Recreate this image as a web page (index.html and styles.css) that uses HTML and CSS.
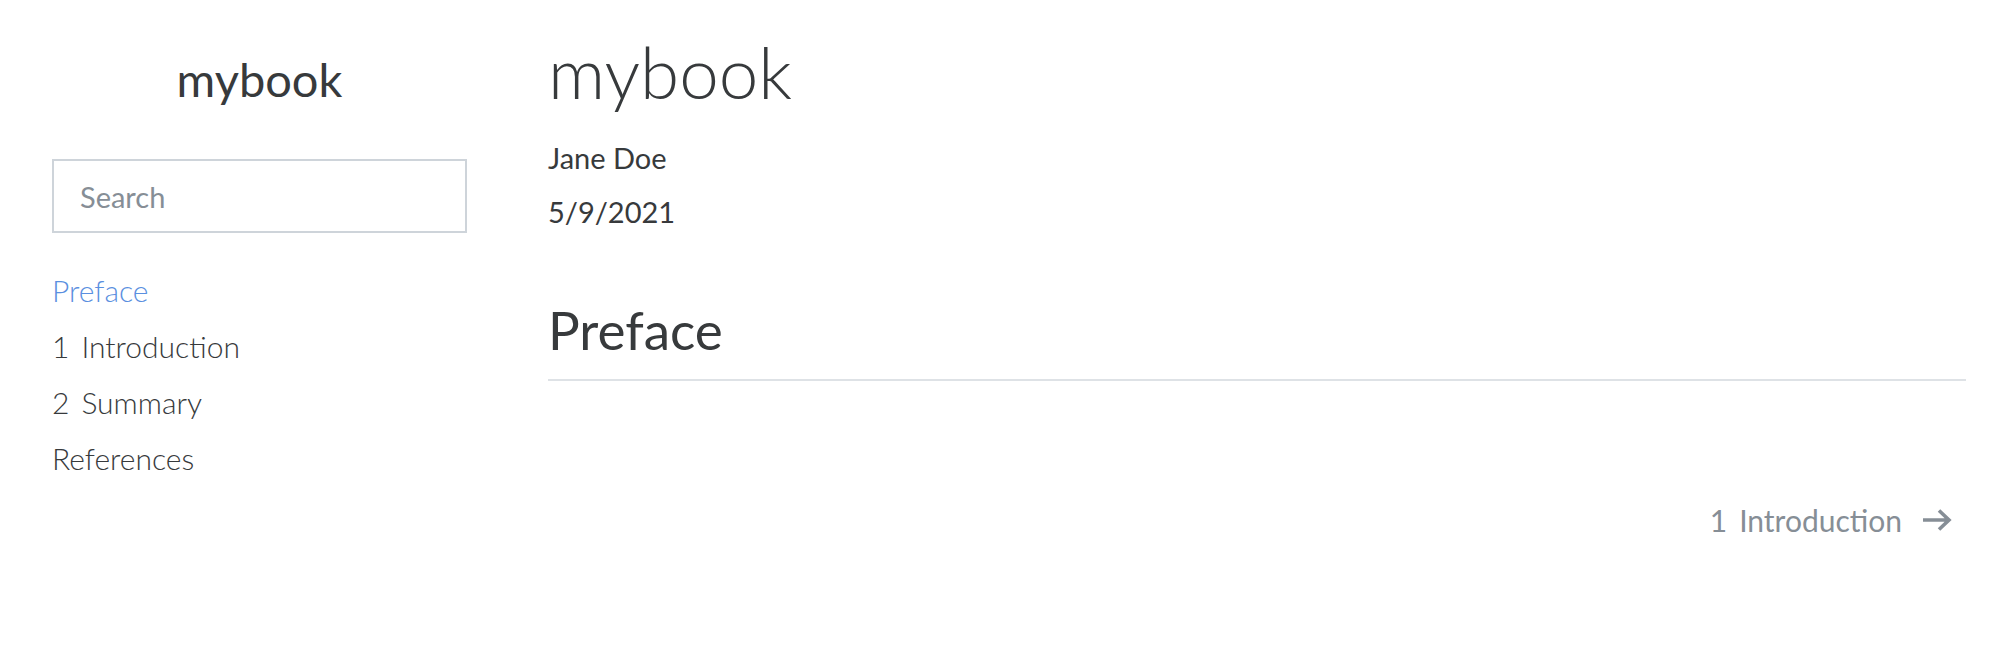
FILE: index.html
```html
<!DOCTYPE html>
<html lang="en">
<head>
<meta charset="utf-8">
<title>mybook</title>
<link rel="stylesheet" href="styles.css">
</head>
<body>
<div class="page">
  <aside class="sidebar">
    <h1 class="book-title">mybook</h1>
    <input class="search" type="search" placeholder="Search">
    <nav class="toc">
      <a class="toc-item active" href="#">Preface</a>
      <a class="toc-item" href="#"><span class="num">1</span>Introduction</a>
      <a class="toc-item" href="#"><span class="num">2</span>Summary</a>
      <a class="toc-item" href="#">References</a>
    </nav>
  </aside>
  <main class="content">
    <h1 class="title">mybook</h1>
    <p class="meta">Jane Doe</p>
    <p class="meta">5/9/2021</p>
    <h2 class="section">Preface</h2>
    <div class="pager">
      <a class="next" href="#"><span class="num">1</span>Introduction
        <svg class="arrow" viewBox="0 0 30 24" width="30" height="24" aria-hidden="true"><path d="M1 12 H27 M17 2.5 L27 12 L17 21.5" fill="none" stroke="currentColor" stroke-width="3.6" stroke-linecap="butt" stroke-linejoin="miter"/></svg>
      </a>
    </div>
  </main>
</div>
</body>
</html>
```
FILE: styles.css
```css
* { box-sizing: border-box; }
html, body { margin: 0; padding: 0; background: #fff; }
body {
  font-family: "Lato", "Source Sans Pro", "Liberation Sans", sans-serif;
  color: #373a3c;
}
.page {
  display: flex;
  gap: 81px;
  padding-left: 52px;
}
.sidebar {
  width: 415px;
  flex: none;
  display: flex;
  flex-direction: column;
  padding-top: 49px;
}
.book-title {
  margin: 0;
  font-size: 47px;
  font-weight: 400;
  line-height: 60px;
  text-align: center;
  color: #373a3c;
}
.search {
  margin-top: 50px;
  height: 74px;
  width: 100%;
  border: 2px solid #ced4da;
  border-radius: 0;
  padding: 0 0 0 26px;
  font-family: inherit;
  font-size: 29px;
  color: #495057;
  outline: none;
  background: #fff;
}
.search::placeholder { color: #868e96; }
.toc {
  margin-top: 29px;
  display: flex;
  flex-direction: column;
}
.toc-item {
  font-size: 30px;
  font-weight: 300;
  line-height: 56px;
  color: #373a3c;
  text-decoration: none;
}
.toc-item.active { color: #5a8fe0; }
.num { margin-right: 0.4em; }
.content {
  width: 1418px;
  flex: none;
  padding-top: 29px;
}
.title {
  margin: 0;
  font-size: 71px;
  font-weight: 300;
  line-height: 86px;
  color: #373a3c;
}
.meta {
  margin: 0;
  font-size: 29px;
  font-weight: 400;
  line-height: 54px;
}
.meta:first-of-type { margin-top: 16px; }
.section {
  margin: 58px 0 0;
  font-size: 53px;
  font-weight: 400;
  line-height: 65px;
  padding-bottom: 17px;
  border-bottom: 2px solid #dee2e6;
}
.pager {
  margin-top: 121px;
  display: flex;
  justify-content: flex-end;
  padding-right: 14px;
}
.next {
  display: flex;
  align-items: center;
  font-size: 30px;
  font-weight: 400;
  line-height: 36px;
  color: #868e96;
  text-decoration: none;
}
.arrow { margin-left: 20px; color: #868e96; }
```
